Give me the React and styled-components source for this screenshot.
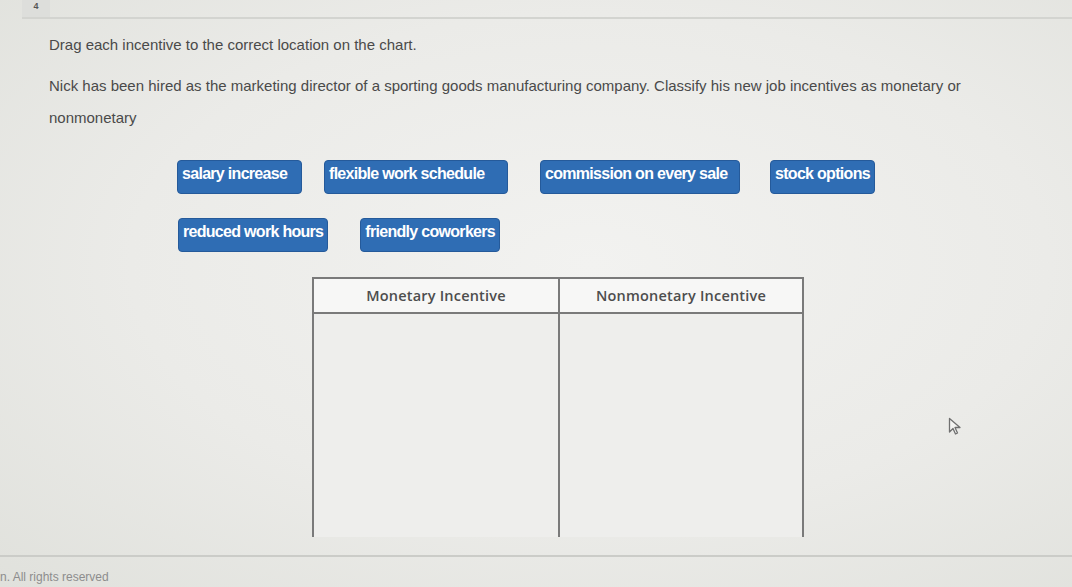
import React from 'react';
import styled, { createGlobalStyle } from 'styled-components';

const GlobalStyle = createGlobalStyle`
  html, body {
    margin: 0;
    padding: 0;
  }
  body {
    font-family: 'Liberation Sans', Arial, sans-serif;
    background: #e9eae6;
  }
`;

const Page = styled.div`
  position: relative;
  width: 1072px;
  height: 587px;
  overflow: hidden;
  background: radial-gradient(ellipse at 55% 45%, #f2f2f0 0%, #ebebe8 55%, #e0e1dc 100%);
  display: flex;
  flex-direction: column;
`;

const TopBar = styled.div`
  display: flex;
  align-items: stretch;
  height: 17px;
  margin-left: 22px;
  border-bottom: 2px solid #d3d4d0;
`;

const Tab = styled.div`
  width: 28px;
  background: #dddedb;
  color: #555;
  font-size: 9px;
  font-weight: bold;
  text-align: center;
  line-height: 12px;
`;

const Content = styled.div`
  padding-left: 49px;
  flex: 1;
`;

const Instruction = styled.p`
  margin: 16px 0 0;
  font-size: 15px;
  line-height: 20px;
  color: #4a4a4a;
`;

const Question = styled.p`
  margin: 15px 0 0;
  width: 935px;
  font-size: 15px;
  line-height: 32px;
  color: #4a4a4a;
`;

const ChipRow = styled.div`
  display: flex;
  margin: ${p => p.$top}px 0 0 128px;
`;

const Chip = styled.div`
  min-width: ${p => p.$w}px;
  margin-left: ${p => p.$gap}px;
  background: #2f6db4;
  border: 1px solid #255a9a;
  border-radius: 4px;
  color: #fff;
  font-size: 16px;
  font-weight: bold;
  letter-spacing: -0.7px;
  height: 34px;
  box-sizing: border-box;
  padding: 3px 4px 0;
  line-height: 20px;
  white-space: nowrap;
`;

const Chart = styled.div`
  margin: 25px 0 0 263px;
  width: 488px;
  display: grid;
  grid-template-columns: 1fr 1fr;
  grid-template-rows: 35px 223px;
  border-top: 2px solid #7a7a7a;
  border-left: 2px solid #7a7a7a;
  border-right: 2px solid #7a7a7a;
`;

const HeadCell = styled.div`
  display: flex;
  align-items: center;
  justify-content: center;
  font-family: 'Open Sans', 'Noto Sans', sans-serif;
  font-weight: 600;
  font-size: 14.5px;
  letter-spacing: 0.2px;
  color: #4d4d4d;
  background: #f7f7f6;
  border-bottom: 2px solid #7a7a7a;
  border-left: ${p => (p.$divider ? '2px solid #7a7a7a' : 'none')};
`;

const DropCell = styled.div`
  background: #eeeeec;
  border-left: ${p => (p.$divider ? '2px solid #7a7a7a' : 'none')};
`;

const Footer = styled.div`
  border-top: 2px solid #cbccc8;
  margin-top: -2px;
  height: 32px;
  display: flex;
  align-items: flex-end;
  padding-bottom: 3px;
  box-sizing: border-box;
  font-size: 12px;
  color: #8d8d8d;
`;

const Cursor = styled.svg`
  position: absolute;
  left: 948px;
  top: 417px;
`;

const rowOne = [
  { label: 'salary increase', w: 125, gap: 0 },
  { label: 'flexible work schedule', w: 184, gap: 22 },
  { label: 'commission on every sale', w: 200, gap: 32 },
  { label: 'stock options', w: 105, gap: 30 },
];
const rowTwo = [
  { label: 'reduced work hours', w: 150, gap: 1 },
  { label: 'friendly coworkers', w: 140, gap: 32 },
];

export default function App() {
  return (
    <>
      <GlobalStyle />
      <Page>
        <TopBar>
          <Tab>4</Tab>
        </TopBar>
        <Content>
          <Instruction>Drag each incentive to the correct location on the chart.</Instruction>
          <Question>
            Nick has been hired as the marketing director of a sporting goods manufacturing company. Classify his new job incentives as monetary or nonmonetary
          </Question>
          <ChipRow $top={26}>
            {rowOne.map(c => (
              <Chip key={c.label} $w={c.w} $gap={c.gap}>{c.label}</Chip>
            ))}
          </ChipRow>
          <ChipRow $top={24}>
            {rowTwo.map(c => (
              <Chip key={c.label} $w={c.w} $gap={c.gap}>{c.label}</Chip>
            ))}
          </ChipRow>
          <Chart>
            <HeadCell>Monetary Incentive</HeadCell>
            <HeadCell $divider>Nonmonetary Incentive</HeadCell>
            <DropCell />
            <DropCell $divider />
          </Chart>
        </Content>
        <Footer>n. All rights reserved</Footer>
        <Cursor width="14" height="20" viewBox="0 0 14 20">
          <path d="M1.5 1.5 L1.5 15 L5 11.5 L7.5 17 L9.5 16 L7 10.5 L12 10.5 Z" fill="#f4f4f2" stroke="#707070" strokeWidth="1.3" strokeLinejoin="round" />
        </Cursor>
      </Page>
    </>
  );
}
